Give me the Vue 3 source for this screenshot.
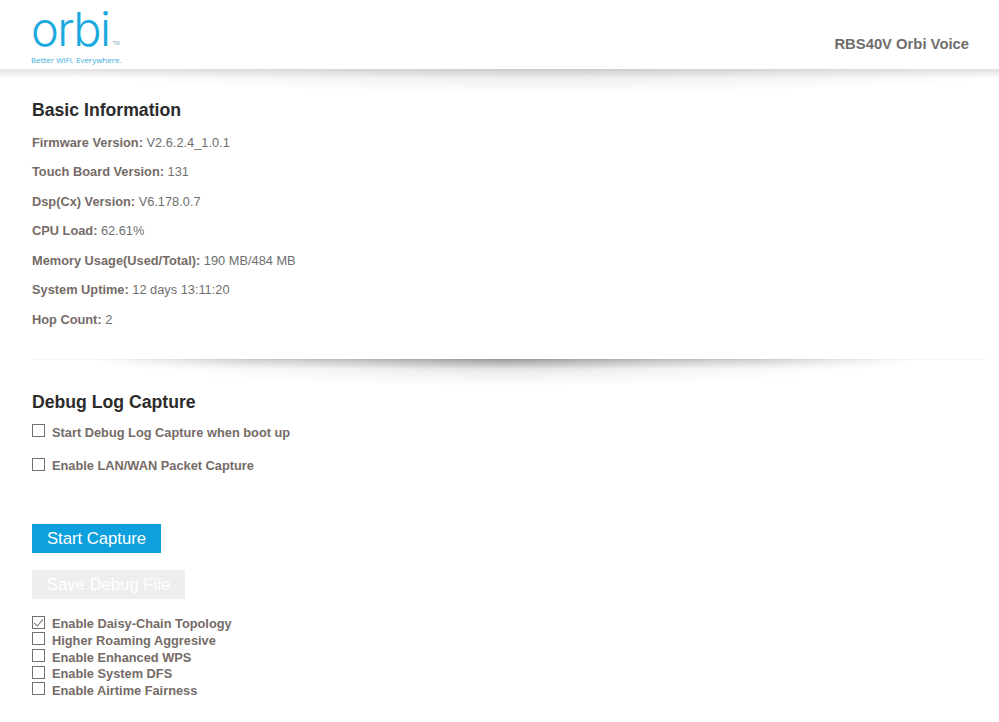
<template>
  <div class="page">
    <header class="top">
      <div class="logo">
        <div class="mark-row">
          <span class="wordmark">orbi</span>
          <span class="tm">TM</span>
        </div>
        <div class="tagline">Better WiFi. Everywhere.</div>
      </div>
      <div class="model">RBS40V Orbi Voice</div>
    </header>

    <main class="content">
      <section class="basic">
        <h2>Basic Information</h2>
        <p v-for="row in info" :key="row.label" class="info-row">
          <b>{{ row.label }}:</b> {{ row.value }}
        </p>
      </section>

      <div class="divider"></div>

      <section class="debug">
        <h2>Debug Log Capture</h2>
        <label v-for="item in captureOptions" :key="item" class="check capture-check">
          <input type="checkbox">
          <span>{{ item }}</span>
        </label>
        <button class="btn start">Start Capture</button>
        <button class="btn save" disabled>Save Debug File</button>
        <div class="options">
          <label v-for="item in options" :key="item.text" class="check">
            <input type="checkbox" :checked="item.on">
            <span>{{ item.text }}</span>
          </label>
        </div>
      </section>
    </main>
  </div>
</template>

<script setup>
const info = [
  { label: 'Firmware Version', value: 'V2.6.2.4_1.0.1' },
  { label: 'Touch Board Version', value: '131' },
  { label: 'Dsp(Cx) Version', value: 'V6.178.0.7' },
  { label: 'CPU Load', value: '62.61%' },
  { label: 'Memory Usage(Used/Total)', value: '190 MB/484 MB' },
  { label: 'System Uptime', value: '12 days 13:11:20' },
  { label: 'Hop Count', value: '2' }
]

const captureOptions = ['Start Debug Log Capture when boot up', 'Enable LAN/WAN Packet Capture']

const options = [
  { text: 'Enable Daisy-Chain Topology', on: true },
  { text: 'Higher Roaming Aggresive', on: false },
  { text: 'Enable Enhanced WPS', on: false },
  { text: 'Enable System DFS', on: false },
  { text: 'Enable Airtime Fairness', on: false }
]
</script>

<style>
html, body {
  background: #fff;
}
</style>

<style scoped>
.page {
  width: 999px;
  height: 722px;
  overflow: hidden;
  font-family: "Liberation Sans", Arial, sans-serif;
  font-size: 12.8px;
  color: #6f6f6f;
}

.top {
  height: 69px;
  box-sizing: border-box;
  display: flex;
  justify-content: space-between;
  padding: 0 30px 0 31px;
  position: relative;
}

/* soft shadow under the header */
.top::after {
  content: "";
  position: absolute;
  left: 0;
  right: 0;
  top: 69px;
  height: 24px;
  background:
    linear-gradient(180deg, rgba(0, 0, 0, 0.11), rgba(0, 0, 0, 0) 9px),
    radial-gradient(ellipse 50% 100% at 55% 0, rgba(0, 0, 0, 0.11), rgba(0, 0, 0, 0.05) 50%, rgba(0, 0, 0, 0) 100%);
}

.logo {
  padding-top: 6px;
}

.mark-row {
  display: flex;
  align-items: flex-end;
  height: 45px;
}

.wordmark {
  font-family: Inter, sans-serif;
  font-weight: 300;
  font-size: 47px;
  line-height: 45px;
  letter-spacing: -1.5px;
  color: #1aa9de;
}

.tm {
  margin: 0 0 5px 3px;
  font-size: 5px;
  line-height: 6px;
  color: #7fa9bb;
}

.tagline {
  font-family: "Open Sans", sans-serif;
  font-size: 8px;
  line-height: 12px;
  margin-top: 3px;
  color: #3aaedb;
}

.model {
  margin-top: 36px;
  font-size: 14.8px;
  line-height: 16px;
  font-weight: bold;
  color: #706e6c;
}

.content {
  padding: 0 32px;
}

h2 {
  margin: 0;
  font-size: 17.65px;
  line-height: 22px;
  font-weight: bold;
  color: #2b2b2b;
}

.basic {
  padding-top: 30px;
}

.info-row {
  margin: 0;
  height: 29.5px;
  line-height: 29.5px;
}

.info-row:first-of-type {
  margin-top: 6.6px;
}

.info-row b {
  color: #756b67;
}

.divider {
  height: 1px;
  margin: 25px -19px 0 0;
  background: #f7f7f7;
  position: relative;
}

.divider::after {
  content: "";
  position: absolute;
  left: 60px;
  right: 70px;
  top: 0;
  height: 27px;
  background:
    linear-gradient(180deg, rgba(0, 0, 0, 0.24), rgba(0, 0, 0, 0) 10px),
    radial-gradient(ellipse 50% 100% at 50% 0, rgba(0, 0, 0, 0.2), rgba(0, 0, 0, 0.06) 55%, rgba(0, 0, 0, 0) 100%);
  -webkit-mask-image: linear-gradient(90deg, transparent, rgba(0, 0, 0, 0.65) 18%, #000 50%, rgba(0, 0, 0, 0.65) 82%, transparent);
  mask-image: linear-gradient(90deg, transparent, rgba(0, 0, 0, 0.65) 18%, #000 50%, rgba(0, 0, 0, 0.65) 82%, transparent);
}

.debug {
  padding-top: 30.5px;
}

.check {
  display: flex;
  align-items: center;
  font-weight: bold;
  color: #756b67;
  height: 16.7px;
}

.capture-check {
  height: 33.5px;
}

.debug h2 + .capture-check {
  margin-top: 3px;
}

.check input {
  appearance: none;
  width: 13px;
  height: 13px;
  margin: 0 7px 3px 0;
  border: 1px solid #6f6f6f;
  background: #fff;
  box-sizing: border-box;
  position: relative;
  flex: none;
}

.check input:checked::after {
  content: "";
  position: absolute;
  left: 3px;
  top: 0;
  width: 4px;
  height: 8px;
  border: solid #6f6f6f;
  border-width: 0 1px 1px 0;
  transform: rotate(40deg);
}

.btn {
  display: block;
  border: 0;
  border-radius: 0;
  padding: 0;
  height: 29px;
  color: #fff;
  font-family: inherit;
  font-size: 16.7px;
}

.start {
  width: 129px;
  margin-top: 41.5px;
  background: #0ea0dc;
}

.save {
  width: 153px;
  margin-top: 17px;
  background: #eeeeee;
}

.options {
  margin-top: 16.3px;
}
</style>
